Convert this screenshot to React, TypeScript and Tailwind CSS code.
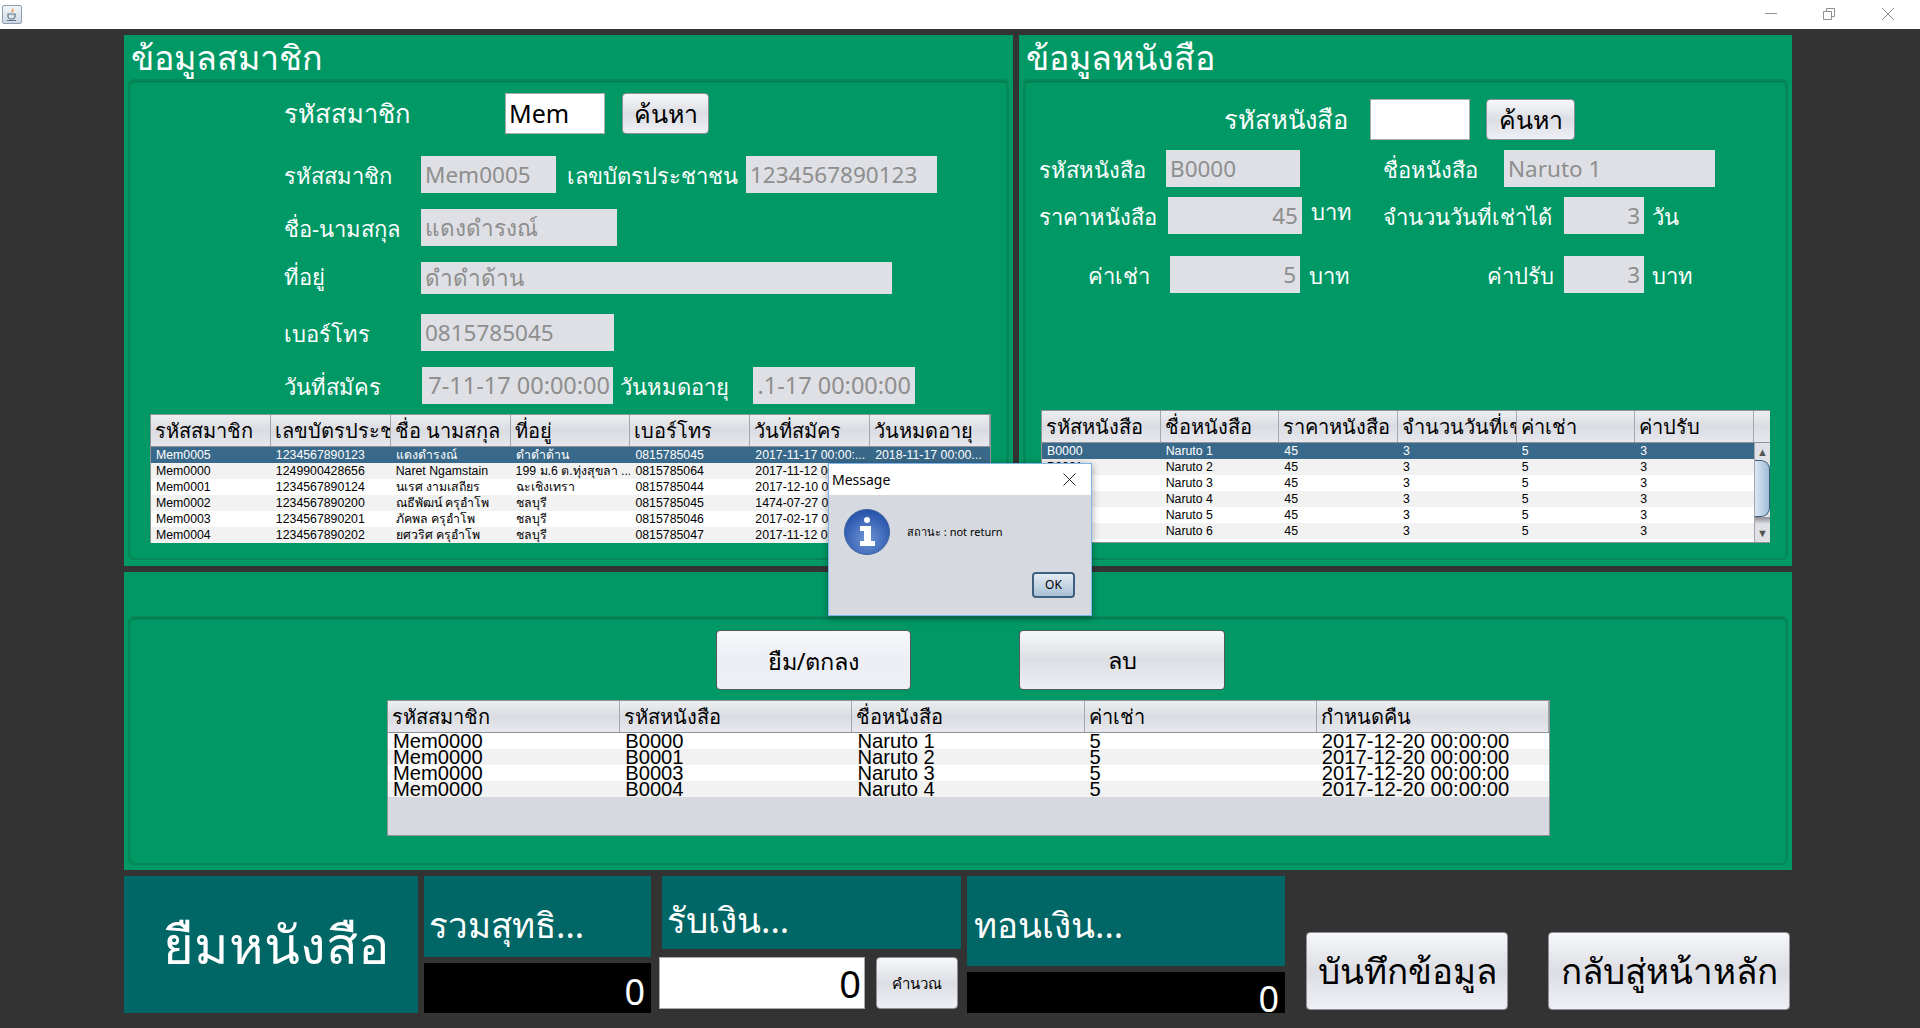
import type { ReactNode } from "react";

const font = "[font-family:'Noto_Sans','Liberation_Sans',sans-serif]";
const cellFont = "[font-family:'Liberation_Sans',sans-serif]";

function Label({ w, children, className = "" }: { w?: string; children: ReactNode; className?: string }) {
  return <div className={`shrink-0 whitespace-nowrap pt-[1px] text-[22px] leading-none text-white ${w ?? ""} ${className}`}>{children}</div>;
}

function Field({ w, h = "h-[37px]", value, right, className = "" }: { w: string; h?: string; value: string; right?: boolean; className?: string }) {
  return (
    <div className={`flex shrink-0 items-center overflow-hidden whitespace-nowrap bg-[#dee0e5] px-[4px] text-[22.500px] text-[#8e8e8e] ${right ? "justify-end" : ""} ${w} ${h} ${className}`}>
      {value}
    </div>
  );
}

function NimbusButton({ w, h, size, children, className = "" }: { w: string; h: string; size: string; children: ReactNode; className?: string }) {
  return (
    <button className={`flex shrink-0 items-center justify-center rounded-[4px] border border-[#8d9098] bg-linear-to-b from-[#f7f8fa] via-[#dcdee4] to-[#eef0f5] whitespace-nowrap text-black ${w} ${h} ${size} ${className}`}>
      {children}
    </button>
  );
}

function TextInput({ w, h, value, className = "" }: { w: string; h: string; value: string; className?: string }) {
  return (
    <div className={`flex shrink-0 items-center border border-[#a8aaae] bg-white px-[3px] text-black ${w} ${h} ${className}`}>
      {value}
    </div>
  );
}

type TableProps = {
  headers: string[];
  rows: string[][];
  col: string;
  rowText: string;
  headText: string;
  selected?: boolean;
};

function Table({ headers, rows, col, rowText, headText, selected }: TableProps) {
  return (
    <>
      <div className="flex h-[32px] shrink-0 border-b border-[#8f9299] bg-linear-to-b from-[#eceef1] via-[#dadce2] to-[#e6e8ed]">
        {headers.map((h) => (
          <div key={h} className={`flex items-center overflow-hidden whitespace-nowrap border-r border-[#a4a7ae] pl-[4px] font-medium text-black ${col} ${headText}`}>
            {h}
          </div>
        ))}
      </div>
      {rows.map((row, i) => {
        const sel = selected && i === 0;
        return (
          <div key={i} className={`flex h-[16px] shrink-0 ${sel ? "bg-[#39698a] text-white" : i % 2 === 0 ? "bg-white text-black" : "bg-[#f2f2f2] text-black"}`}>
            {row.map((c, j) => (
              <div key={j} className={`flex h-[16px] items-center overflow-hidden whitespace-nowrap pl-[5px] pt-[1px] ${cellFont} ${col} ${rowText}`}>
                {c}
              </div>
            ))}
          </div>
        );
      })}
    </>
  );
}

function Panel({ title, w, h, innerH, children }: { title?: string; w: string; h: string; innerH: string; children: ReactNode }) {
  return (
    <section className={`shrink-0 bg-[#009966] px-[4px] ${w} ${h}`}>
      <h2 className="flex h-[44px] items-center pl-[3px] text-[34px] leading-none text-white">{title}</h2>
      <div className={`rounded-[6px] border-2 border-[#078656] shadow-[inset_0_1px_2px_#04734a] ${innerH}`}>{children}</div>
    </section>
  );
}

function JavaIcon() {
  return (
    <div className="flex h-[19px] w-[20px] items-center justify-center rounded-[2px] border border-[#8d9fb5] bg-linear-to-b from-[#f4f6f9] to-[#cfd8e3]">
      <svg width="14" height="15" viewBox="0 0 14 15">
        <path d="M7.500 1c1 2-2 3-1 5 1-1 3-2 1.500-5z" fill="#e8823a" />
        <path d="M3 7h7v3a2.500 2.500 0 0 1-2.500 2h-2A2.500 2.500 0 0 1 3 10z" fill="none" stroke="#5a7286" strokeWidth="1.200" />
        <path d="M2 13.500h9" stroke="#5a7286" strokeWidth="1" />
      </svg>
    </div>
  );
}

function InfoIcon() {
  return (
    <svg width="46" height="46" viewBox="0 0 46 46" className="shrink-0">
      <defs>
        <radialGradient id="infoFill" cx="50%" cy="65%" r="65%">
          <stop offset="0%" stopColor="#6f95d6" />
          <stop offset="100%" stopColor="#2350a8" />
        </radialGradient>
      </defs>
      <circle cx="23" cy="23" r="22.500" fill="url(#infoFill)" stroke="#3a5f9f" />
      <circle cx="23" cy="11" r="3" fill="#fff" />
      <path d="M16 17h11v15h4v5H16v-5h4V22h-4z" fill="#fff" />
    </svg>
  );
}

function Scrollbar() {
  return (
    <div className="flex h-[101px] w-[16px] flex-col border-l border-[#a4a7ae] bg-[#dfe1e6]">
      <div className="flex h-[17px] items-center justify-center text-[11px] leading-none text-[#555]">▲</div>
      <div className="h-[57px] rounded-r-[9px] border border-l-0 border-[#3e5a76] bg-linear-to-r from-[#dce8f3] via-[#bcd2e6] to-[#9fbcd6]" />
      <div className="h-[7px] bg-linear-to-b from-[#8b8d92] to-[#dfe1e6]" />
      <div className="flex flex-1 items-center justify-center text-[11px] leading-none text-[#555]">▼</div>
    </div>
  );
}

const memberRows = [
  ["Mem0005", "1234567890123", "แดงดำรงณ์", "ดำดำด้าน", "0815785045", "2017-11-17 00:00:...", "2018-11-17 00:00..."],
  ["Mem0000", "1249900428656", "Naret Ngamstain", "199 ม.6 ต.ทุ่งสุขลา ...", "0815785064", "2017-11-12 00:00:...", "2018-11-12 00:00..."],
  ["Mem0001", "1234567890124", "นเรศ งามเสถียร", "ฉะเชิงเทรา", "0815785044", "2017-12-10 00:00:...", "2018-12-10 00:00..."],
  ["Mem0002", "1234567890200", "ณธีพัฒน์ ครุอำโพ", "ชลบุรี", "0815785045", "1474-07-27 00:00:...", "1475-07-27 00:00..."],
  ["Mem0003", "1234567890201", "ภัคพล ครุอำโพ", "ชลบุรี", "0815785046", "2017-02-17 00:00:...", "2018-02-17 00:00..."],
  ["Mem0004", "1234567890202", "ยศวริศ ครุอำโพ", "ชลบุรี", "0815785047", "2017-11-12 00:00:...", "2018-11-12 00:00..."],
];

const bookRows = [0, 1, 2, 3, 4, 5].map((i) => [`B000${i}`, `Naruto ${i + 1}`, "45", "3", "5", "3"]);

const loanRows = [
  ["Mem0000", "B0000", "Naruto 1", "5", "2017-12-20 00:00:00"],
  ["Mem0000", "B0001", "Naruto 2", "5", "2017-12-20 00:00:00"],
  ["Mem0000", "B0003", "Naruto 3", "5", "2017-12-20 00:00:00"],
  ["Mem0000", "B0004", "Naruto 4", "5", "2017-12-20 00:00:00"],
];

export default function App() {
  return (
    <div className={`relative flex h-[1028px] w-[1920px] flex-col overflow-hidden bg-[#333333] ${font}`}>
      {/* window title bar */}
      <header className="flex h-[29px] shrink-0 items-center justify-between bg-white pl-[2px]">
        <JavaIcon />
        <div className="flex items-center">
          <svg width="170" height="29" viewBox="0 0 170 29" fill="none" stroke="#8f8f8f" strokeWidth="1">
            <path d="M15 13.500h12" />
            <path d="M73.500 11.500h8v8h-8zM76.500 11.500v-3h8v8h-3" />
            <path d="M132 8l12 12M144 8l-12 12" />
          </svg>
        </div>
      </header>

      <main className="flex flex-col pl-[124px] pt-[6px]">
        <div className="flex gap-[6px]">
          <Panel title="ข้อมูลสมาชิก" w="w-[889px]" h="h-[531px]" innerH="h-[481px]">
            <div className="flex items-center pl-[154px] pt-[12px]">
              <Label w="w-[221px]" className="!text-[25.500px]">รหัสสมาชิก</Label>
              <TextInput w="w-[100px]" h="h-[41px]" value="Mem" className="text-[25px]" />
              <NimbusButton w="w-[87px]" h="h-[41px]" size="text-[25px]" className="ml-[17px]">ค้นหา</NimbusButton>
            </div>
            <div className="mt-[22px] flex items-center pl-[154px]">
              <Label w="w-[137px]">รหัสสมาชิก</Label>
              <Field w="w-[135px]" value="Mem0005" />
              <Label w="w-[179px]" className="ml-[11px]">เลขบัตรประชาชน</Label>
              <Field w="w-[191px]" value="1234567890123" />
            </div>
            <div className="mt-[16px] flex items-center pl-[154px]">
              <Label w="w-[137px]">ชื่อ-นามสกุล</Label>
              <Field w="w-[196px]" value="แดงดำรงณ์" />
            </div>
            <div className="mt-[16px] flex items-center pl-[154px]">
              <Label w="w-[137px]" className="-mt-[6px]">ที่อยู่</Label>
              <Field w="w-[471px]" h="h-[32px]" value="ดำดำด้าน" />
            </div>
            <div className="mt-[20px] flex items-center pl-[154px]">
              <Label w="w-[137px]">เบอร์โทร</Label>
              <Field w="w-[193px]" value="0815785045" />
            </div>
            <div className="mt-[16px] flex items-center pl-[154px]">
              <Label w="w-[138px]">วันที่สมัคร</Label>
              <Field w="w-[191px]" value="7-11-17 00:00:00" right className="!px-[3px] !text-[23.500px]" />
              <Label w="w-[133px]" className="ml-[7px]">วันหมดอายุ</Label>
              <Field w="w-[162px]" value=".1-17 00:00:00" right className="!text-[23.500px]" />
            </div>
            <div className="ml-[20px] mt-[10px] flex h-[129px] w-[841px] flex-col border border-[#8f9299] bg-white">
              <Table
                headers={["รหัสสมาชิก", "เลขบัตรประชาชน", "ชื่อ นามสกุล", "ที่อยู่", "เบอร์โทร", "วันที่สมัคร", "วันหมดอายุ"]}
                rows={memberRows}
                col="w-[120px]"
                headText="text-[20px]"
                rowText="text-[12.300px]"
                selected
              />
            </div>
          </Panel>

          <Panel title="ข้อมูลหนังสือ" w="w-[773px]" h="h-[531px]" innerH="h-[481px]">
            <div className="flex items-center pl-[199px] pt-[18px]">
              <Label w="w-[146px]" className="!text-[25.500px]">รหัสหนังสือ</Label>
              <TextInput w="w-[100px]" h="h-[41px]" value="" />
              <NimbusButton w="w-[89px]" h="h-[41px]" size="text-[25px]" className="ml-[16px]">ค้นหา</NimbusButton>
            </div>
            <div className="mt-[10px] flex items-center pl-[14px]">
              <Label w="w-[127px]">รหัสหนังสือ</Label>
              <Field w="w-[134px]" value="B0000" />
              <Label w="w-[121px]" className="ml-[83px]">ชื่อหนังสือ</Label>
              <Field w="w-[211px]" value="Naruto 1" />
            </div>
            <div className="mt-[10px] flex items-center pl-[14px]">
              <Label w="w-[129px]">ราคาหนังสือ</Label>
              <Field w="w-[134px]" value="45" right />
              <Label w="w-[72px]" className="-mt-[10px] ml-[9px]">บาท</Label>
              <Label w="w-[181px]">จำนวนวันที่เช่าได้</Label>
              <Field w="w-[80px]" value="3" right />
              <Label className="ml-[8px]">วัน</Label>
            </div>
            <div className="mt-[22px] flex items-center pl-[14px]">
              <Label w="w-[82px]" className="ml-[49px]">ค่าเช่า</Label>
              <Field w="w-[130px]" value="5" right />
              <Label w="w-[72px]" className="ml-[9px]">บาท</Label>
              <Label w="w-[183px]" className="pr-[10px] text-right">ค่าปรับ</Label>
              <Field w="w-[80px]" value="3" right />
              <Label className="ml-[8px]">บาท</Label>
            </div>
            <div className="ml-[16px] mt-[117px] flex h-[133px] w-[729px] border border-[#8f9299] bg-white">
              <div className="flex w-[712px] flex-col">
                <Table
                  headers={["รหัสหนังสือ", "ชื่อหนังสือ", "ราคาหนังสือ", "จำนวนวันที่เช่าได้", "ค่าเช่า", "ค่าปรับ"]}
                  rows={bookRows}
                  col="w-[119px]"
                  headText="text-[20px]"
                  rowText="text-[12.300px]"
                  selected
                />
              </div>
              <div className="flex w-[16px] flex-col">
                <div className="h-[32px] border-b border-[#8f9299] bg-linear-to-b from-[#eceef1] via-[#dadce2] to-[#e6e8ed]" />
                <Scrollbar />
              </div>
            </div>
          </Panel>
        </div>

        <div className="mt-[6px]">
          <Panel w="w-[1668px]" h="h-[298px]" innerH="h-[249px]">
            <div className="flex pl-[586px] pt-[12px]">
              <NimbusButton w="w-[195px]" h="h-[60px]" size="text-[23.500px]" className="border-[#55585e] from-[#f7f8fa] via-[#eceef4] to-[#e6e9f0] pt-[3px]">ยืม/ตกลง</NimbusButton>
              <NimbusButton w="w-[206px]" h="h-[60px]" size="text-[23.500px]" className="ml-[108px] border-[#55585e] pt-[2px]">ลบ</NimbusButton>
            </div>
            <div className="ml-[257px] mt-[10px] flex h-[136px] w-[1163px] flex-col border border-[#8f9299] bg-[#d6d9df]">
              <Table
                headers={["รหัสสมาชิก", "รหัสหนังสือ", "ชื่อหนังสือ", "ค่าเช่า", "กำหนดคืน"]}
                rows={loanRows}
                col="w-[232.200px]"
                headText="text-[20px]"
                rowText="text-[20.200px]"
              />
            </div>
          </Panel>
        </div>

        <div className="mt-[6px] flex h-[137px]">
          <div className="flex w-[294px] shrink-0 items-center justify-center bg-[#006666] pl-[10px] text-[52.500px] text-white">ยืมหนังสือ</div>

          <div className="ml-[6px] flex w-[227px] shrink-0 flex-col">
            <div className="flex h-[81px] items-center bg-[#006666] pl-[5px] pt-[18px] text-[35px] text-white">รวมสุทธิ...</div>
            <div className="mt-[6px] flex h-[50px] items-end justify-end overflow-hidden bg-black pr-[6px] text-[36px] leading-[42px] text-white">0</div>
          </div>

          <div className="ml-[8px] flex w-[302px] shrink-0 flex-col">
            <div className="ml-[3px] flex h-[73px] w-[299px] items-center bg-[#006666] pl-[5px] pt-[15px] text-[35px] text-white">รับเงิน...</div>
            <div className="mt-[8px] flex h-[52px]">
              <TextInput w="w-[206px]" h="h-[52px]" value="0" className="justify-end pr-[3px] text-[38px]" />
              <NimbusButton w="w-[82px]" h="h-[52px]" size="text-[15px]" className="ml-[11px]">คำนวณ</NimbusButton>
            </div>
          </div>

          <div className="ml-[6px] flex w-[318px] shrink-0 flex-col">
            <div className="flex h-[90px] items-center bg-[#006666] pl-[7px] pt-[8px] text-[35px] text-white">ทอนเงิน...</div>
            <div className="mt-[6px] flex h-[41px] justify-end overflow-hidden bg-black pr-[6px] pt-[6px] text-[36px] leading-[42px] text-white">0</div>
          </div>

          <NimbusButton w="w-[202px]" h="h-[78px]" size="text-[35px]" className="ml-[21px] mt-[56px]">บันทึกข้อมูล</NimbusButton>
          <NimbusButton w="w-[242px]" h="h-[78px]" size="text-[35px]" className="ml-[40px] mt-[56px]">กลับสู่หน้าหลัก</NimbusButton>
        </div>
      </main>

      {/* message dialog */}
      <div className="absolute left-[828px] top-[463px] flex h-[153px] w-[264px] flex-col border border-[#7eb4ea] bg-[#d6d9df] shadow-[0_2px_8px_rgba(0,0,0,0.35)]">
        <div className="flex h-[31px] shrink-0 items-center justify-between bg-white pl-[3px] pr-[15px] text-[14px] text-black">
          <span>Message</span>
          <svg width="13" height="13" viewBox="0 0 13 13" stroke="#222" strokeWidth="1" fill="none">
            <path d="M0.500 0.500l12 12M12.500 0.500l-12 12" />
          </svg>
        </div>
        <div className="flex items-center pl-[15px] pt-[14px]">
          <InfoIcon />
          <span className="ml-[17px] text-[11px] text-black">สถานะ : not return</span>
        </div>
        <div className="mt-[17px] flex justify-end pr-[16px]">
          <button className="flex h-[26px] w-[43px] items-center justify-center rounded-[4px] border-2 border-[#3f5f80] bg-linear-to-b from-[#e4ebf2] to-[#a9c0d6] text-[12px] text-black">OK</button>
        </div>
      </div>
    </div>
  );
}
